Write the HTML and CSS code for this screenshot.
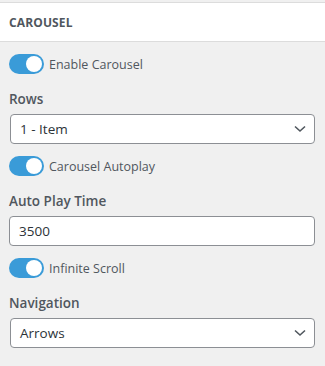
FILE: index.html
```html
<!DOCTYPE html>
<html lang="en">
<head>
    <meta charset="UTF-8">
    <meta name="viewport" content="width=device-width, initial-scale=1.0">
    <title>Carousel</title>
    <link rel="stylesheet" href="styles.css">
</head>
<body>
    <div class="panel">
        <div class="panel-head">
            <h3>CAROUSEL</h3>
        </div>
        <div class="panel-body">
            <label class="toggle">
                <span class="switch"><span class="knob"></span></span>
                <span class="toggle-text">Enable Carousel</span>
            </label>
            <div class="field">
                <div class="label">Rows</div>
                <div class="select">
                    <span>1 - Item</span>
                    <svg class="chevron" width="12" height="8" viewBox="0 0 12 8"><path d="M1 1.5 L6 6 L11 1.5" fill="none" stroke="#50575e" stroke-width="1.6"/></svg>
                </div>
            </div>
            <label class="toggle">
                <span class="switch"><span class="knob"></span></span>
                <span class="toggle-text">Carousel Autoplay</span>
            </label>
            <div class="field">
                <div class="label">Auto Play Time</div>
                <div class="input">3500</div>
            </div>
            <label class="toggle">
                <span class="switch"><span class="knob"></span></span>
                <span class="toggle-text">Infinite Scroll</span>
            </label>
            <div class="field">
                <div class="label">Navigation</div>
                <div class="select">
                    <span>Arrows</span>
                    <svg class="chevron" width="12" height="8" viewBox="0 0 12 8"><path d="M1 1.5 L6 6 L11 1.5" fill="none" stroke="#50575e" stroke-width="1.6"/></svg>
                </div>
            </div>
        </div>
    </div>
</body>
</html>
```

FILE: styles.css
```css
* {
    margin: 0;
    padding: 0;
    box-sizing: border-box;
}
body {
    background-color: #f0f0f0;
    font-family: "Open Sans", "Noto Sans", sans-serif;
    color: #3c434a;
    padding-top: 2px;
}
.panel-head {
    background-color: #fff;
    border-top: 1px solid #dcdcdc;
    border-bottom: 1px solid #dcdcdc;
    height: 40px;
    display: flex;
    align-items: center;
    padding-left: 9px;
}
.panel-head h3 {
    font-size: 12px;
    font-weight: 700;
    color: #50575e;
    letter-spacing: 0.01em;
}
.panel-body {
    padding: 12px 10px 0 9px;
    display: flex;
    flex-direction: column;
}
.toggle {
    display: flex;
    align-items: center;
    gap: 5px;
    height: 20px;
}
.switch {
    width: 35px;
    height: 20px;
    border-radius: 10px;
    background-color: #3a9bd8;
    position: relative;
    display: block;
}
.knob {
    position: absolute;
    top: 2px;
    right: 2px;
    width: 16px;
    height: 16px;
    border-radius: 50%;
    background-color: #fff;
}
.toggle-text {
    font-size: 12.5px;
    color: #50575e;
}
.field {
    display: flex;
    flex-direction: column;
    padding: 18px 0 12px;
}
.label {
    font-size: 13.5px;
    font-weight: 600;
    color: #50575e;
    line-height: 14px;
    margin-bottom: 8px;
}
.select,
.input {
    height: 30px;
    background-color: #fff;
    border: 1px solid #8c8f94;
    border-radius: 4px;
    display: flex;
    align-items: center;
    justify-content: space-between;
    padding: 0 8px 0 9px;
    font-size: 13.5px;
    color: #2c3338;
}
.select {
    margin-left: 1px;
}
.chevron {
    display: block;
}
```
